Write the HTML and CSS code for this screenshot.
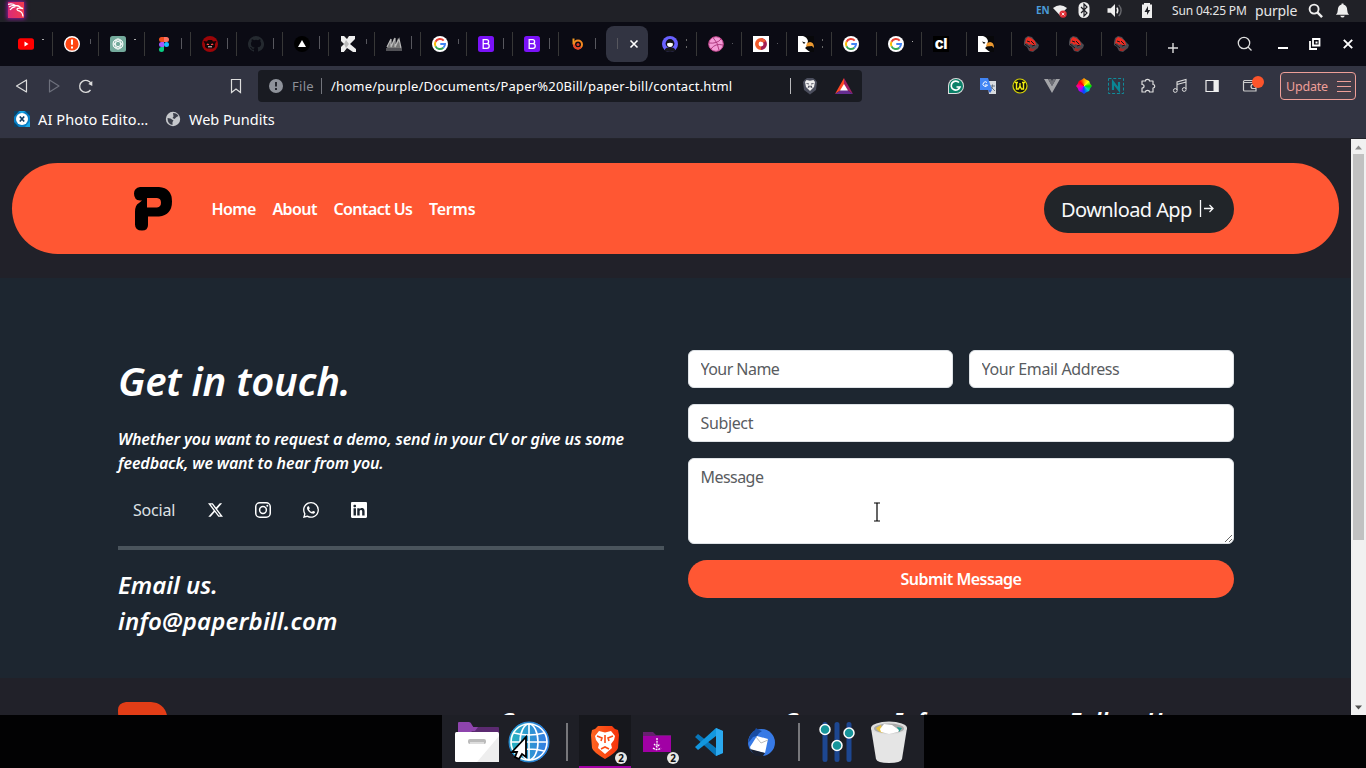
FILE: index.html
```html
<!DOCTYPE html>
<html lang="en">
<head>
<meta charset="utf-8">
<title>Contact</title>
<link rel="stylesheet" href="styles.css">
</head>
<body>
<svg class="defs" aria-hidden="true">
  <defs>
    <linearGradient id="kali" x1="0" x2="1"><stop offset="0" stop-color="#d92a78"/><stop offset="1" stop-color="#f23a4e"/></linearGradient>
    <linearGradient id="globe" x1="0" x2="1"><stop offset="0" stop-color="#27b6bd"/><stop offset="1" stop-color="#3478e5"/></linearGradient>
    <linearGradient id="brave" x1="0" x2="1"><stop offset="0" stop-color="#ff6520"/><stop offset="1" stop-color="#f5320b"/></linearGradient>
  </defs>
  <symbol id="google" viewBox="0 0 16 16"><circle cx="8" cy="8" r="8" fill="#fff"/><g fill="none" stroke-width="2"><path d="M11.700 4.700A5 5 0 0 0 3.500 5.800" stroke="#ea4335"/><path d="M3.500 5.800a5 5 0 0 0 0 4.600" stroke="#fbbc05"/><path d="M3.500 10.400a5 5 0 0 0 7.800 1.300" stroke="#34a853"/><path d="M11.300 11.700A5 5 0 0 0 13 8H8.300" stroke="#4285f4"/></g></symbol>
  <symbol id="boot" viewBox="0 0 16 16"><rect width="16" height="16" rx="2.500" fill="#7a12f7"/><path d="M5.200 3.700h3.400a2 2 0 0 1 0 4H5.200zm0 4h3.700a2.300 2.300 0 0 1 0 4.600H5.200z" fill="none" stroke="#fff" stroke-width="1.300"/></symbol>
  <symbol id="eagle" viewBox="0 0 16 16"><rect width="16" height="16" fill="#08080a"/><path d="M0 0h5q4 1 5 5l-1 4q0 2-2 3 2 2 5 4H0z" fill="#fff"/><path d="M9 7l3-1q4 0 4 6l-2-2-6 .5z" fill="#ed9a32"/><path d="M4 5.500l3.500 1L6 8z" fill="#111"/></symbol>
  <symbol id="beast" viewBox="0 0 16 16"><path d="M1 6l1-4 3-2 4 1 3 4 4 4-1 3-5 4-4-1-2-4-3-2z" fill="#4a4a50"/><path d="M3 3l2-2 3 1 4 3 1 4-3 1-2-2-2 1-2-2-2 1z" fill="#ee2b21"/><path d="M6 11l4 2 4-2-4 4-3 0z" fill="#a52724"/><path d="M4 5l3 1M8 5l3 3M2 8l5 4M9 10l3-1" stroke="#15151b"/></symbol>
</svg>

<header class="panel">
  <svg class="kali" viewBox="0 0 16 16"><rect width="16" height="16" fill="url(#kali)"/><path d="M0 2.500q4-1.500 7.500 1M1 5q3-2 6.500-1.500 3.500 0 5 2l2.500 1-3-.3Q9 6 9 7.500q0 1 2.500 1.500 3 1 3.500 5.500M2 8q2-3 5.500-3.500" fill="none" stroke="#fff" stroke-width="1.300"/></svg>
  <div class="tray">
    <b class="lang">EN</b>
    <svg class="t-wifi" viewBox="0 0 16 16"><path d="M0 4.500Q8-1.500 16 4.500L8 13z" fill="#eee"/><circle cx="11.500" cy="11.500" r="4.200" fill="#df2e36"/><path d="M10 10l3 3m0-3l-3 3" stroke="#fff"/></svg>
    <svg class="t-bt" viewBox="0 0 12 16"><rect x=".5" width="11" height="16" rx="5.500" fill="#eee"/><path d="M3 5l6 6-3 3V2l3 3-6 6" fill="none" stroke="#202127" stroke-width="1.200"/></svg>
    <svg class="t-vol" viewBox="0 0 16 16"><path d="M0 5.500h3.500L8 1v14l-4.500-4.500H0z" fill="#eee"/><path d="M10 5q2 3 0 6" fill="none" stroke="#eee" stroke-width="1.500"/><path d="M12 2q5 6 0 12" fill="none" stroke="#66676c" stroke-width="1.500"/></svg>
    <svg class="t-bat" viewBox="0 0 12 16"><path d="M1 2.500h2V1h6v1.500h2V16H1z" fill="#eee"/><path d="M7 4L3.500 10H6v3l3.200-5H7z" fill="#202127"/></svg>
    <span class="clock">Sun 04:25 PM</span>
    <span class="user">purple</span>
    <svg class="t-find" viewBox="0 0 16 16"><circle cx="6.500" cy="6.500" r="4.800" fill="none" stroke="#eee" stroke-width="2"/><path d="M10 10l5 5" stroke="#eee" stroke-width="2.600"/></svg>
    <svg class="t-bell" viewBox="0 0 16 16"><path d="M7 1h2v1q4 1 4 6 0 3 2 5H1q2-2 2-5 0-5 4-6zM5.500 14h5q-1 2-2.500 2t-2.500-2z" fill="#eee"/></svg>
  </div>
</header>

<nav class="tabs">
  <div class="tab"><svg viewBox="0 0 16 16"><rect y="2.200" width="16" height="11.600" rx="2.500" fill="#f00"/><path d="M6.500 5.600v4.800L10.500 8z" fill="#fff"/></svg><i class="dash"></i></div>
  <div class="tab"><svg viewBox="0 0 16 16"><circle cx="8" cy="8" r="7.300" fill="#ff4612" stroke="#fff" stroke-width="1.400"/><path d="M8 3.500v5.300m0 1.700v2" stroke="#fff" stroke-width="2"/></svg><i class="half"></i></div>
  <div class="tab"><svg viewBox="0 0 16 16"><rect width="16" height="16" rx="2.500" fill="#74aa9c"/><g fill="none" stroke="#fff" stroke-width=".8"><circle cx="8" cy="8" r="5"/><ellipse cx="8" cy="8" rx="2.500" ry="5"/><ellipse cx="8" cy="8" rx="2.500" ry="5" transform="rotate(60 8 8)"/><ellipse cx="8" cy="8" rx="2.500" ry="5" transform="rotate(120 8 8)"/></g></svg><i class="dash"></i></div>
  <div class="tab"><svg viewBox="0 0 16 16"><path d="M8 1H5.500a2.500 2.500 0 0 0 0 5H8z" fill="#f24e1e"/><path d="M8 1h2.500a2.500 2.500 0 0 1 0 5H8z" fill="#ff7262"/><path d="M8 6H5.500a2.500 2.500 0 0 0 0 5H8z" fill="#a259ff"/><circle cx="10.500" cy="8.500" r="2.500" fill="#1abcfe"/><path d="M8 11H5.500A2.500 2.500 0 1 0 8 13.500z" fill="#0acf83"/></svg><i></i></div>
  <div class="tab"><svg viewBox="0 0 16 16"><circle cx="8" cy="8" r="8" fill="#9b0508"/><path d="M1.500 5l3.500.5 1-1.500h4l1 1.500 3.500-.5-1.500 3v3l-2 1.500H5L3 11V8z" fill="#130506"/><path d="M5 8l2 .5H5zm6 0l-2 .5h2z" fill="#f44" stroke="#f44"/><path d="M6 10.800h4" stroke="#ddd"/></svg><i></i></div>
  <div class="tab"><svg viewBox="0 0 16 16"><path fill="#24292f" d="M8 0a8 8 0 0 0-2.530 15.590c.4.070.55-.17.550-.38v-1.490c-2.010.37-2.530-.49-2.690-.94-.09-.23-.48-.94-.82-1.130-.28-.15-.68-.52-.01-.53.63-.01 1.080.58 1.230.82.720 1.210 1.870.87 2.330.66.070-.52.280-.87.510-1.070-1.780-.2-3.640-.89-3.640-3.950 0-.87.310-1.590.82-2.150-.08-.2-.36-1.020.080-2.120 0 0 .67-.21 2.200.82a7.500 7.500 0 0 1 4 0c1.530-1.040 2.200-.82 2.200-.82.440 1.100.16 1.920.080 2.120.51.560.82 1.270.82 2.150 0 3.070-1.870 3.750-3.650 3.950.29.250.54.730.54 1.480v2.200c0 .21.150.46.550.38A8 8 0 0 0 8 0z"/></svg><i></i></div>
  <div class="tab"><svg viewBox="0 0 16 16"><circle cx="8" cy="8" r="8" fill="#000"/><path d="M8 4l4 7H4z" fill="#fff"/></svg><i class="tall"></i></div>
  <div class="tab"><svg viewBox="0 0 16 16"><path d="M1 0h14v3l-5 5 6 5v3h-3L7 12l-3 4H1z" fill="#eee"/><path d="M0 4l4 4-4 4zM4 0l3 3 2-3zm0 16l3-3 2 3z" fill="#17171d"/><path d="M6 4l3 4-3 4-2-4z" fill="#bbb"/></svg><i class="half"></i></div>
  <div class="tab"><svg viewBox="0 0 16 16"><path d="M1 12L5 3v7l3-8 1 8 3-8 3 10z" fill="#777"/><path d="M1 11L5 3v8l4-9v9l4-8 2 9" fill="none" stroke="#bbb" stroke-width="1.200"/><path d="M1 12v3m2-3v3m2-3v3m2-3v3m2-3v3m2-3v3m2-3v3m2-3v3" stroke="#999"/></svg><i class="tall"></i></div>
  <div class="tab"><svg><use href="#google"/></svg><i class="half"></i></div>
  <div class="tab"><svg><use href="#boot"/></svg><i></i></div>
  <div class="tab"><svg><use href="#boot"/></svg><i></i></div>
  <div class="tab last"><svg viewBox="0 0 16 16"><path d="M3.500 2.500v6" stroke="#f39b21" stroke-width="2"/><circle cx="8" cy="8.500" r="4" fill="none" stroke="#f58a20" stroke-width="2"/><path d="M4 8.500a4 4 0 0 0 7 2.700" fill="none" stroke="#e8432a" stroke-width="2"/><circle cx="8" cy="8.500" r="1.500" fill="#e63c25"/></svg><i></i></div>
  <div class="tab-active"><i></i><svg viewBox="0 0 10 10"><path d="M1.500 1.500l7 7m0-7l-7 7" stroke="#fff" stroke-width="1.600"/></svg></div>
  <div class="tab narrow"><svg viewBox="0 0 16 16"><circle cx="8" cy="8" r="8" fill="#6961ff"/><path d="M2.500 15q.5-3.500 3.500-3.500h4q3 0 3.500 3.500-5.500 2-11 0z" fill="#18181f"/><circle cx="8" cy="7.500" r="4.400" fill="#111"/><path d="M5 7.500q3-1.500 6 0 0 3.500-3 3.500T5 7.500z" fill="#fff"/></svg><i class="dots"></i></div>
  <div class="tab narrow"><svg viewBox="0 0 16 16"><circle cx="8" cy="8" r="7.300" fill="#f39bd6" stroke="#c5478f"/><path d="M5 1.500q5 5 6 12.500M1 7q8 1 12-4M3 13q4-6 12-4" fill="none" stroke="#b13b81"/></svg><i class="dot"></i></div>
  <div class="tab narrow"><svg viewBox="0 0 16 16"><rect width="16" height="16" fill="#fff"/><path d="M8 3.800a4.200 4.200 0 1 0 0 8.400" fill="none" stroke="#f15a2b" stroke-width="3.500"/><path d="M8 3.800a4.200 4.200 0 0 1 0 8.400" fill="none" stroke="#a51e52" stroke-width="3.500"/><path d="M8 3.800a4.200 4.200 0 0 1 3.500 2" fill="none" stroke="#ef5a34" stroke-width="3.500"/></svg><i class="dot"></i></div>
  <div class="tab narrow"><svg><use href="#eagle"/></svg><i class="dots"></i></div>
  <div class="tab narrow"><svg><use href="#google"/></svg></div>
  <div class="tab narrow"><svg><use href="#google"/></svg><i class="dot up"></i></div>
  <div class="tab narrow"><span class="cl">cl</span></div>
  <div class="tab narrow"><svg><use href="#eagle"/></svg></div>
  <div class="tab narrow"><svg><use href="#beast"/></svg></div>
  <div class="tab narrow"><svg><use href="#beast"/></svg></div>
  <div class="tab narrow"><svg><use href="#beast"/></svg></div>
  <svg class="plus" viewBox="0 0 12 12"><path d="M6 1v10M1 6h10" stroke="#ddd" stroke-width="1.400"/></svg>
  <svg class="w-find" viewBox="0 0 16 16"><circle cx="7" cy="7" r="5.700" fill="none" stroke="#ddd" stroke-width="1.300"/><path d="M11 11l3.500 3.500" stroke="#ddd" stroke-width="1.300"/></svg>
  <svg class="w-min" viewBox="0 0 10 12"><path d="M0 10h10" stroke="#fff" stroke-width="2"/></svg>
  <svg class="w-max" viewBox="0 0 12 12"><path d="M4 1h6.500v6.500H4zM1 3v8h7" fill="none" stroke="#fff" stroke-width="1.800"/><path d="M6.500 3.500h2v2h-2z" fill="#fff"/></svg>
  <svg class="w-close" viewBox="0 0 10 10"><path d="M.8.8l8.400 8.400m0-8.400L.8 9.200" stroke="#fff" stroke-width="1.900"/></svg>
</nav>

<div class="toolbar">
  <svg class="ic first" viewBox="0 0 16 16"><path d="M12.500 2v12L2.500 8z" fill="none" stroke="#ddd" stroke-width="1.200" stroke-linejoin="round"/></svg>
  <svg class="ic nav" viewBox="0 0 16 16"><path d="M3.500 2v12L13 8z" fill="none" stroke="#6d707c" stroke-width="1.200" stroke-linejoin="round"/></svg>
  <svg class="ic nav" viewBox="0 0 16 16"><path d="M12.500 12A6 6 0 1 1 13.200 6" fill="none" stroke="#ddd" stroke-width="1.300"/><path d="M14.300 3v5l-4-2z" fill="#ddd"/></svg>
  <svg class="ic mark" viewBox="0 0 16 16"><path d="M3.500 1.500h9v13L8 11l-4.500 3.500z" fill="none" stroke="#ddd" stroke-width="1.200"/></svg>
  <div class="url">
    <svg class="info" viewBox="0 0 16 16"><circle cx="8" cy="8" r="7" fill="#8f939b"/><path d="M8 4v4.500m0 1.500v2" stroke="#1b1d24" stroke-width="1.800"/></svg>
    <span class="file">File</span><i class="bar"></i><span class="path">/home/purple/Documents/Paper%20Bill/paper-bill/contact.html</span>
    <i class="bar right"></i>
    <svg class="lion" viewBox="0 0 16 18"><path d="M5 1h6l2 1.500 2 2.500-1 8-6 4.500L2 13 1 5l2-2.500z" fill="#4b4e5d"/><path d="M4.500 3L8 3.700 11.500 3 13 5l-1 5-4 4-4-4-1-5z" fill="#eee"/><path d="M4.500 6.500l2.500.5m4.500-.5L9 7M7 8.500l-1 2 2-1 2 1-1-2" fill="none" stroke="#474a59" stroke-width=".9"/></svg>
    <svg class="bat" viewBox="0 0 18 16"><path d="M9 0L0 16l9-6z" fill="#ff4724"/><path d="M9 0l9 16-9-6z" fill="#9e1f63"/><path d="M0 16h18L9 10z" fill="#662d91"/><path d="M9 6l4 6.500H5z" fill="#fff"/></svg>
  </div>
  <div class="exts">
    <svg viewBox="0 0 16 16"><path d="M0 16V8a8 8 0 1 1 8 8z" fill="#ddd"/><path d="M1 15V8a7 7 0 1 1 7 7z" fill="#0b8068"/><path d="M11 4.500A4.500 4.500 0 1 0 12 9H8.500" fill="none" stroke="#fff" stroke-width="1.700"/></svg>
    <svg viewBox="0 0 16 16"><path d="M7 3h9v13H9z" fill="#d7dadd"/><path d="M10 8h5m-2.500-1.500V8q0 3-3 4m1.500-3l4 4" stroke="#697684" fill="none"/><path d="M0 0h8l4 12H0z" fill="#4285f4"/><path d="M7 4.500A2.300 2.300 0 1 0 7.500 7H5" fill="none" stroke="#fff"/><path d="M8 12h4l-2 3z" fill="#3367d6"/></svg>
    <svg viewBox="0 0 16 16"><circle cx="8" cy="8" r="7" fill="#121410" stroke="#d9d405" stroke-width="1.200"/><path d="M4.500 4v7h2L8 8l1.500 3h2V4M3 4.500h3m4 0h3M8 5v3" fill="none" stroke="#f2ec12" stroke-width="1.400"/></svg>
    <svg viewBox="0 0 16 16"><path d="M0 1h4l4 7 4-7h4L8 15z" fill="#a4a5a9"/><path d="M4 1h3l1 2 1-2h3L8 8z" fill="#6f7077"/></svg>
    <span class="wheel"></span>
    <svg viewBox="0 0 16 16"><rect x=".5" y=".5" width="15" height="15" fill="none" stroke="#108c9b" stroke-dasharray="3 1.800"/><path d="M5 12V4l6 8V4" fill="none" stroke="#0a8594" stroke-width="2.200"/></svg>
    <svg viewBox="0 0 16 16"><path d="M2 3h3.500a2 1.700 0 0 1 4 0H13v3.500a1.700 1.700 0 0 1 0 3.500v4H9.500a2 1.700 0 0 0-4 0H2v-4a2 1.700 0 0 0 0-3.500z" fill="none" stroke="#ddd" stroke-width="1.200" stroke-linejoin="round"/></svg>
    <svg viewBox="0 0 16 16"><path d="M5 12V4l9-2.500V11M5 6.500L14 4" fill="none" stroke="#ddd" stroke-width="1.100"/><circle cx="3.300" cy="12.500" r="1.900" fill="none" stroke="#ddd"/><circle cx="12.200" cy="11.500" r="1.900" fill="none" stroke="#ddd"/></svg>
    <svg viewBox="0 0 16 16"><path d="M2 2.500h12v11H2z" fill="none" stroke="#eee" stroke-width="1.200"/><path d="M9.500 2h5v12h-5z" fill="#eee"/></svg>
  </div>
  <svg class="wallet" viewBox="0 0 22 18"><path d="M14 6V4.500H2.500a1.500 1.500 0 0 0-1 1V14a1 1 0 0 0 1 1H14v-2M2 6.500h12v2m0 0H10q-2 2 0 4h4z" fill="none" stroke="#ccc" stroke-width="1.200"/><circle cx="16" cy="6" r="6" fill="#fb542b"/></svg>
  <div class="update"><span>Update</span><i class="menu"></i></div>
</div>
<div class="bookmarks">
  <svg viewBox="0 0 16 16"><rect width="16" height="16" fill="#087fc6"/><path d="M0 0h5L0 6zm11 0h5v5zM0 11l5 5H0z" fill="#0e4164"/><path d="M16 10v6h-5zM5 0h6L8 3z" fill="#19a9e7"/><circle cx="8" cy="8" r="6" fill="#fff"/><path d="M5.800 5.500l4.400 5m0-5l-4.400 5" stroke="#123e65" stroke-width="1.700"/></svg>
  <span class="b-ai">AI Photo Edito…</span>
  <svg viewBox="0 0 16 16"><circle cx="8" cy="8" r="7.200" fill="#c6c8cc"/><path d="M2.500 7l3 .5 3 2-1 1.500V14q-5-1-5-7zM8 2q4 0 5.500 3l-2 1-2 2-2-1 1-1.500z" fill="#3b3e4a"/></svg>
  <span class="b-web">Web Pundits</span>
</div>

<div class="viewport">
  <main class="page">
    <div class="head">
      <div class="pill">
        <svg class="logo" viewBox="0 0 38 44"><path fill-rule="evenodd" d="M6 0h19q13 1 13 14.500T25 29.500H14V38q0 5.500-6 5.500-7 0-7-6V25q0-7 4-9l3-2.500H6Q0 13 0 6.500 0 1 6 0zm7 11v9.500h10q4-.5 4-4.800T23 11z"/></svg>
        <div class="links"><a>Home</a><a>About</a><a>Contact Us</a><a class="terms">Terms</a></div>
        <a class="download"><span>Download App</span><svg viewBox="0 0 16 20"><path d="M1.500 1v17M5 9.500h9M10.500 6l3.500 3.500-3.500 3.500" fill="none" stroke="#f8f9fa" stroke-width="1.300"/></svg></a>
      </div>
    </div>
    <section class="contact">
      <div class="left">
        <h1>Get in touch.</h1>
        <p>Whether you want to request a demo, send in your CV or give us some<br>feedback, we want to hear from you.</p>
        <div class="social"><span>Social</span>
          <svg viewBox="0 0 16 16"><path d="M12.600.75h2.454l-5.360 6.142L16 15.250h-4.937l-3.867-5.070-4.425 5.070H.316l5.733-6.570L0 .75h5.063l3.495 4.633L12.601.75Zm-.86 13.028h1.360L4.323 2.145H2.865z"/></svg>
          <svg viewBox="0 0 16 16"><rect x=".75" y=".75" width="14.500" height="14.500" rx="4" fill="none" stroke="#fff" stroke-width="1.500"/><circle cx="8" cy="8" r="3.400" fill="none" stroke="#fff" stroke-width="1.500"/><circle cx="12.300" cy="3.700" r="1"/></svg>
          <svg viewBox="0 0 16 16"><path d="M13.601 2.326A7.850 7.850 0 0 0 7.994 0C3.627 0 .068 3.558.064 7.926c0 1.399.366 2.760 1.057 3.965L0 16l4.204-1.102a7.900 7.900 0 0 0 3.790.965h.004c4.368 0 7.926-3.558 7.930-7.930A7.900 7.900 0 0 0 13.600 2.326zM7.994 14.521a6.600 6.600 0 0 1-3.356-.92l-.24-.144-2.494.654.666-2.433-.156-.251a6.560 6.560 0 0 1-1.007-3.505c0-3.626 2.957-6.584 6.591-6.584a6.560 6.560 0 0 1 4.660 1.931 6.560 6.560 0 0 1 1.928 4.660c-.004 3.639-2.961 6.592-6.592 6.592m3.615-4.934c-.197-.099-1.170-.578-1.353-.646-.182-.065-.315-.099-.445.099-.133.197-.513.646-.627.775-.114.133-.232.148-.43.050-.197-.1-.836-.308-1.592-.985-.59-.525-.985-1.175-1.103-1.372-.114-.198-.011-.304.088-.403.087-.088.197-.232.296-.346.100-.114.133-.198.198-.33.065-.134.034-.248-.015-.347-.05-.099-.445-1.076-.612-1.470-.16-.389-.323-.335-.445-.34-.114-.007-.247-.007-.38-.007a.73.73 0 0 0-.529.247c-.182.198-.691.677-.691 1.654s.71 1.916.81 2.049c.098.133 1.394 2.132 3.383 2.992.47.205.84.326 1.129.418.475.152.904.129 1.246.080.380-.058 1.171-.48 1.338-.943.164-.464.164-.86.114-.943-.049-.084-.182-.133-.38-.232"/></svg>
          <svg viewBox="0 0 16 16"><path d="M0 1.146C0 .513.526 0 1.175 0h13.650C15.474 0 16 .513 16 1.146v13.708c0 .633-.526 1.146-1.175 1.146H1.175C.526 16 0 15.487 0 14.854zm4.943 12.248V6.169H2.542v7.225zm-1.200-8.212c.837 0 1.358-.554 1.358-1.248-.015-.709-.52-1.248-1.342-1.248S2.400 3.226 2.400 3.934c0 .694.521 1.248 1.327 1.248zm4.908 8.212V9.359c0-.216.016-.432.080-.586.173-.431.568-.878 1.232-.878.869 0 1.216.662 1.216 1.634v3.865h2.401V9.250c0-2.220-1.184-3.252-2.764-3.252-1.274 0-1.845.7-2.165 1.193v.025h-.016l.016-.025V6.169h-2.400c.030.678 0 7.225 0 7.225z"/></svg>
        </div>
        <hr>
        <h2>Email us.<br><span class="mail">info@paperbill.com</span></h2>
      </div>
      <form class="form">
        <div class="pair"><input type="text" placeholder="Your Name"><input class="email" type="text" placeholder="Your Email Address"></div>
        <input class="email" type="text" placeholder="Subject">
        <textarea placeholder="Message"></textarea>
        <button type="button">Submit Message</button>
      </form>
    </section>
    <footer class="foot">
      <svg class="f-logo" viewBox="0 0 50 20"><path d="M8 0h25q16 1 17 20H2Q0 17 0 8 0 1 8 0z" fill="#e23d17"/></svg>
      <h3 class="f1">Company</h3><h3 class="f2">Company Info</h3><h3 class="f3">Follow Us</h3>
    </footer>
  </main>
  <div class="scroll">
    <svg viewBox="0 0 15 14"><path d="M4 10h7L7.500 6z" fill="#8c8c8c"/></svg>
    <div class="thumb"></div>
    <svg class="down" viewBox="0 0 15 14"><path d="M4 5h7L7.500 9z" fill="#505050"/></svg>
  </div>
</div>

<div class="desktop">
  <div class="dock">
    <div class="app"><svg viewBox="0 0 44 44"><path d="M3 3q0-1 1-1h10q2 0 3 3l2 3h3v10H3z" fill="#8e44ad"/><path d="M20 7h23q1 0 1 1v7H14z" fill="#5b2a70"/><path d="M14 7h9l-3 4h-6z" fill="#8e44ad"/><rect y="12" width="44" height="30" rx="1.500" fill="#fff"/><path d="M44 16v26H22z" fill="#eee"/><rect x="13" y="19" width="18" height="5" rx="2" fill="#bbb"/><path d="M15 24v-2h14v2z" fill="#ddd"/></svg></div>
    <div class="app"><svg viewBox="0 0 44 44"><circle cx="22" cy="22" r="20" fill="url(#globe)" stroke="#2a85d8"/><g fill="none" stroke="#fff" stroke-width="1.600"><circle cx="22" cy="22" r="18"/><ellipse cx="22" cy="22" rx="9" ry="18"/><path d="M22 4v36M4 22h36M7 13q15 4 30 0M7 31q15-4 30 0"/></g><path d="M19 17v20l-4-3-3 5-4-2 2-5H5z" fill="#fff" stroke="#000" stroke-width="1.800"/></svg></div>
    <i class="sep"></i>
    <div class="app on"><svg viewBox="0 0 44 44"><path d="M15 6h14l3 3 3 1 1 5-1 13q-1 4-13 11Q10 32 9 28L8 15l1-5 3-1z" fill="url(#brave)"/><path d="M16 11l6 1.500 6-1.500 4 5-1 4-3 4 1 4-7 6-7-6 1-4-3-4-1-4z" fill="#fff"/><path d="M14 16l5 2-1 3m12-5l-5 2 1 3M22 15v8m-4 6l4-2 4 2" fill="none" stroke="#fc4c16" stroke-width="1.600"/></svg><b>2</b></div>
    <div class="app"><svg viewBox="0 0 44 44"><path d="M8 12h10l3 3h15v16H8z" fill="#672070"/><rect x="8" y="16" width="28" height="16" fill="#a100a5"/><path d="M22 18v9m-3-3l3 3 3-3m-7 4q4 3 8 0" fill="none" stroke="#fff" stroke-width="1.300" stroke-dasharray="2 .8"/></svg><b>2</b></div>
    <div class="app"><svg viewBox="0 0 44 44"><path d="M29 8l7 3v22l-7 3L8 17l3-3 18 14z" fill="#0876b9"/><path d="M29 8L8 27l3 3 18-14z" fill="#1297df"/><path d="M29 8l7 3v22l-7 3z" fill="#2ba9ef"/></svg></div>
    <div class="app"><svg viewBox="0 0 44 44"><circle cx="22.500" cy="22.500" r="13.500" fill="#377ae6"/><path d="M9 23q1-9 7-13l1-2q2 2 6 3-4 2-5 5l-4 1q-3 4-5 6z" fill="#174ba3"/><path d="M11 27l7-11 11 3-3 14-14-3z" fill="#fff"/><path d="M17 17l5 6 7-3" fill="none" stroke="#bbb"/><path d="M11 29l15 4-2 3H16z" fill="#1a2030"/></svg></div>
    <i class="sep"></i>
    <div class="app"><svg viewBox="0 0 44 44"><path d="M10 4.500v35M22 4.500v35M34 4.500v35" stroke="#1d4791" stroke-width="5" stroke-linecap="round"/><g fill="#17959a" stroke="#fff" stroke-width="1.500"><circle cx="10" cy="9.500" r="5"/><circle cx="22" cy="25.500" r="5"/><circle cx="34" cy="13" r="5"/></g></svg></div>
    <div class="app"><svg viewBox="0 0 44 44"><path d="M4 8l5 31q1 4 13 4t13-4l5-31z" fill="#e5e5e5"/><ellipse cx="22" cy="8" rx="18" ry="6.500" fill="#ddd"/><ellipse cx="22" cy="8.500" rx="15" ry="5" fill="#aaa"/><path d="M9 8l5-3 2 8q-5-1-7-5z" fill="#e8c240"/><path d="M30 7l5 1-3 4z" fill="#1a9b90"/><path d="M13 9l4-5 8 1 7 5-1 2-9 2-8-2z" fill="#fff"/></svg></div>
  </div>
</div>
<svg class="ibeam" viewBox="0 0 8 20"><path d="M1 1h2.500l.5.500.5-.5H7M4 1.500v17M1 19h2.500l.5-.5.5.5H7" fill="none" stroke="#000" stroke-width="1.200"/></svg>
</body>
</html>
```
FILE: styles.css
```css
* { box-sizing: border-box; }
body { margin: 0; width: 1366px; height: 768px; overflow: hidden; position: relative; background: #020203; font-family: "Noto Sans", sans-serif; color: #fff; display: grid; grid-template-rows: 22px 44px 40px 33px 576px 53px; }
svg { display: block; flex: none; }
span, a { white-space: nowrap; }
.defs { position: absolute; width: 0; height: 0; }

.panel { background: #202127; display: flex; align-items: center; justify-content: space-between; padding: 0 16px 0 8px; }
.kali { width: 16px; height: 16px; margin-top: -2px; box-shadow: 0 0 4px 1px #9218a3; }
.tray { display: flex; align-items: center; height: 20px; margin-top: -2px; color: #e6e6e6; }
.lang { font-size: 10px; color: #4b9bd8; width: 17px; }
.t-wifi { width: 14px; height: 14px; margin-top: 2px; }
.t-bt { width: 12px; height: 16px; margin-left: 11px; }
.t-vol { width: 16px; height: 15px; margin-left: 17px; }
.t-bat { width: 12px; height: 16px; margin-left: 18px; }
.clock { font-size: 12px; width: 74px; margin-left: 19px; letter-spacing: -.15px; }
.user { font-size: 14px; width: 41px; margin-left: 9px; letter-spacing: -.15px; }
.t-find { width: 15px; height: 15px; margin-left: 12px; }
.t-bell { width: 15px; height: 16px; margin-left: 12px; }

.tabs { background: #0b0b14; display: flex; align-items: center; padding-left: 6px; }
.tab { flex: none; width: 47px; margin-right: -1px; height: 24px; border-right: 1px solid #373737; padding-left: 12px; display: flex; align-items: center; }
.tab > svg, .cl { width: 16px; height: 16px; flex: none; }
.tab > i, .tab-active > i { width: 1px; height: 11px; background: #57575e; margin-left: 9px; margin-top: -1px; }
.tab.last { border: 0; }
.tab > i.tall { height: 13px; margin-top: -3px; }
.tab > i.dash { width: 2px; height: 1px; background: #aaa; margin: -10px 0 0 8px; }
.tab > i.half { height: 5px; margin: -6px 0 0 10px; }
.tab > i.dots { width: 1px; height: 9px; background: linear-gradient(#666 2px, transparent 2px 7px, #666 7px); margin-left: 8px; }
.tab > i.dot { width: 1px; height: 1px; margin-left: 8px; }
.tab > i.up { margin-top: -6px; background: #aaa; }
.tab.narrow { width: 46px; padding-left: 12px; }
.tab-active + .tab.narrow { padding-left: 11px; }
.cl { background: #000; font: 800 15px/15px Inter, sans-serif; text-align: center; letter-spacing: -.3px; }
.tab-active { flex: none; width: 42px; height: 36px; margin: 0 3px 0 2px; background: #323442; border-radius: 8px; display: flex; align-items: center; padding-left: 2px; }
.tab-active > svg { width: 10px; height: 10px; margin-left: 11px; }
.plus { width: 12px; height: 12px; margin: 7px 0 0 21px; }
.w-find { width: 16px; height: 16px; margin-left: 58px; }
.w-min { width: 10px; height: 12px; margin-left: 25px; }
.w-max { width: 12px; height: 12px; margin-left: 21px; }
.w-close { width: 10px; height: 10px; margin-left: 22px; }

.toolbar { background: #323442; display: flex; align-items: center; }
.ic { width: 16px; height: 16px; }
.ic.first { margin-left: 14px; }
.ic.nav { margin-left: 16px; }
.ic.mark { margin-left: 134px; }
.url { width: 604px; height: 32px; margin-left: 14px; background: #191b22; border-radius: 4px; display: flex; align-items: center; font-size: 13px; padding-left: 10px; }
.info { width: 16px; height: 16px; }
.file { margin-left: 8px; color: #8d9098; width: 24px; letter-spacing: .3px; }
.bar { width: 1px; height: 16px; background: #73757c; margin-left: 5px; }
.path { margin-left: 9px; width: 459px; letter-spacing: .2px; }
.bar.right { margin: 0; background: #b8b8bb; }
.lion { width: 16px; height: 18px; margin-left: 11px; }
.bat { width: 18px; height: 16px; margin-left: 17px; }
.exts { display: flex; gap: 16px; margin-left: 86px; }
.exts svg { width: 16px; height: 16px; }
.wheel { width: 16px; height: 16px; background: conic-gradient(#f90, #ff0, #0d0, #0cc, #04f, #a0f, #f08, #f00, #f90); clip-path: polygon(50% 0, 62% 10%, 82% 18%, 90% 38%, 100% 50%, 90% 62%, 82% 82%, 62% 90%, 50% 100%, 38% 90%, 18% 82%, 10% 62%, 0 50%, 10% 38%, 18% 18%, 38% 10%); }
.wallet { width: 22px; height: 18px; margin: -3px 0 0 22px; }
.update { width: 76px; height: 28px; margin-left: 16px; border: 1px solid #ef9f98; border-radius: 4px; background: #433d48; color: #ef9f98; font-size: 12.500px; display: flex; align-items: center; padding-left: 5px; }
.update span { width: 45px; letter-spacing: -.2px; }
.menu { width: 14px; height: 11px; margin-left: 6px; border: solid #ef9f98; border-width: 1px 0; background: linear-gradient(#ef9f98, #ef9f98) 0 4px / 14px 1px no-repeat; }
.bookmarks { background: #323442; border-bottom: 1px solid #23242b; display: flex; align-items: center; padding: 0 0 6px 14px; font-size: 14.500px; }
.bookmarks svg { width: 16px; height: 16px; }
.b-ai { width: 112px; margin: 0 16px 0 8px; letter-spacing: .12px; }
.bookmarks svg:nth-of-type(2) { margin-left: -1px; }
.b-web { margin-left: 8px; }

.viewport { display: flex; overflow: hidden; }
.page { width: 1351px; background: #212129; overflow: hidden; }
.head { height: 139px; padding: 24px 12px; }
.pill { height: 91px; background: #ff5733; border-radius: 46px; display: flex; align-items: center; padding: 0 105px 0 122px; }
.logo { width: 38px; height: 44px; }
.links { display: flex; gap: 16.500px; margin-left: 39.500px; font-size: 16px; font-weight: 600; flex: 1; letter-spacing: -.57px; }
.links .terms { letter-spacing: -.2px; }
.download { width: 190px; height: 48px; border-radius: 24px; background: #212529; display: flex; align-items: center; padding-left: 17px; font-size: 20px; color: #f8f9fa; }
.download span { width: 131px; letter-spacing: -.58px; padding-top: 1px; }
.download svg { width: 16px; height: 20px; margin-left: 7px; }
.contact { height: 400px; background: #1d2630; display: grid; grid-template-columns: 546px 546px; gap: 24px; padding: 72px 117px 0 118px; }
h1 { font: italic 600 40px/48px "Noto Sans", sans-serif; margin: 7px 0 22px; white-space: nowrap; letter-spacing: -.25px; }
p { font: italic 600 16px/24px "Noto Sans", sans-serif; margin: 0 0 23px; letter-spacing: -.135px; white-space: nowrap; }
.social { display: flex; align-items: center; height: 24px; padding-left: 15px; color: #dee2e6; }
.social span { width: 42px; margin-right: 33px; letter-spacing: -.2px; }
.social svg { width: 16px; height: 16px; margin-right: 32px; fill: #fff; }
.social svg:nth-of-type(1) { width: 15px; }
hr { border: 0; height: 4px; background: #4a545c; margin: 24px 0 17px; }
h2 { font: italic 600 24px/36px "Noto Sans", sans-serif; margin: 0; }
.mail { letter-spacing: .17px; }
.form { display: flex; flex-direction: column; gap: 16px; }
.pair { display: grid; grid-template-columns: 1fr 1fr; gap: 16px; }
input, textarea { width: 100%; height: 38px; border: 1px solid #dee2e6; border-radius: 6px; padding: 6px 11.500px; font: 16px/24px "Noto Sans", sans-serif; letter-spacing: -.55px; background: #fff; display: block; margin: 0; }
.email { letter-spacing: -.36px; }
textarea { height: 86px; resize: vertical; }
::placeholder { color: #595c5f; opacity: 1; }
button { height: 38px; border: 0; border-radius: 19px; background: #ff5733; color: #fff; font: 600 16px/24px "Noto Sans", sans-serif; letter-spacing: -.53px; padding: 0; }
.foot { height: 60px; display: flex; align-items: flex-start; padding: 24px 0 0 118px; }
.f-logo { width: 50px; height: 20px; }
h3 { font: italic 600 24px/29px "Noto Sans", sans-serif; margin: 4px 0 0; white-space: nowrap; }
.f1 { margin-left: 331px; width: 284px; }
.f2 { width: 285px; }
.scroll { width: 15px; background: #f1f1f1; display: flex; flex-direction: column; }
.scroll svg { width: 15px; height: 15px; }
.thumb { width: 11px; height: 386px; margin-left: 2px; background: #c1c1c1; }
.scroll .down { margin-top: auto; }

.desktop { display: flex; justify-content: center; }
.dock { width: 482px; height: 53px; background: #1e1f26; display: flex; align-items: center; padding-left: 9px; }
.app { width: 52px; height: 53px; padding: 5px 4px 0; position: relative; }
.app svg { width: 44px; height: 44px; }
.app.on { background: #16171c; border-bottom: 2px solid #a100a5; }
.app b { position: absolute; left: 36px; top: 37px; width: 12px; height: 12px; border-radius: 50%; background: #e8e8e4; color: #111; font-size: 10px; line-height: 12px; text-align: center; }
.sep { width: 2px; height: 38px; background: #77777b; margin: 0 11px; flex: none; }
.ibeam { position: absolute; left: 873px; top: 502px; width: 8px; height: 20px; }
```
